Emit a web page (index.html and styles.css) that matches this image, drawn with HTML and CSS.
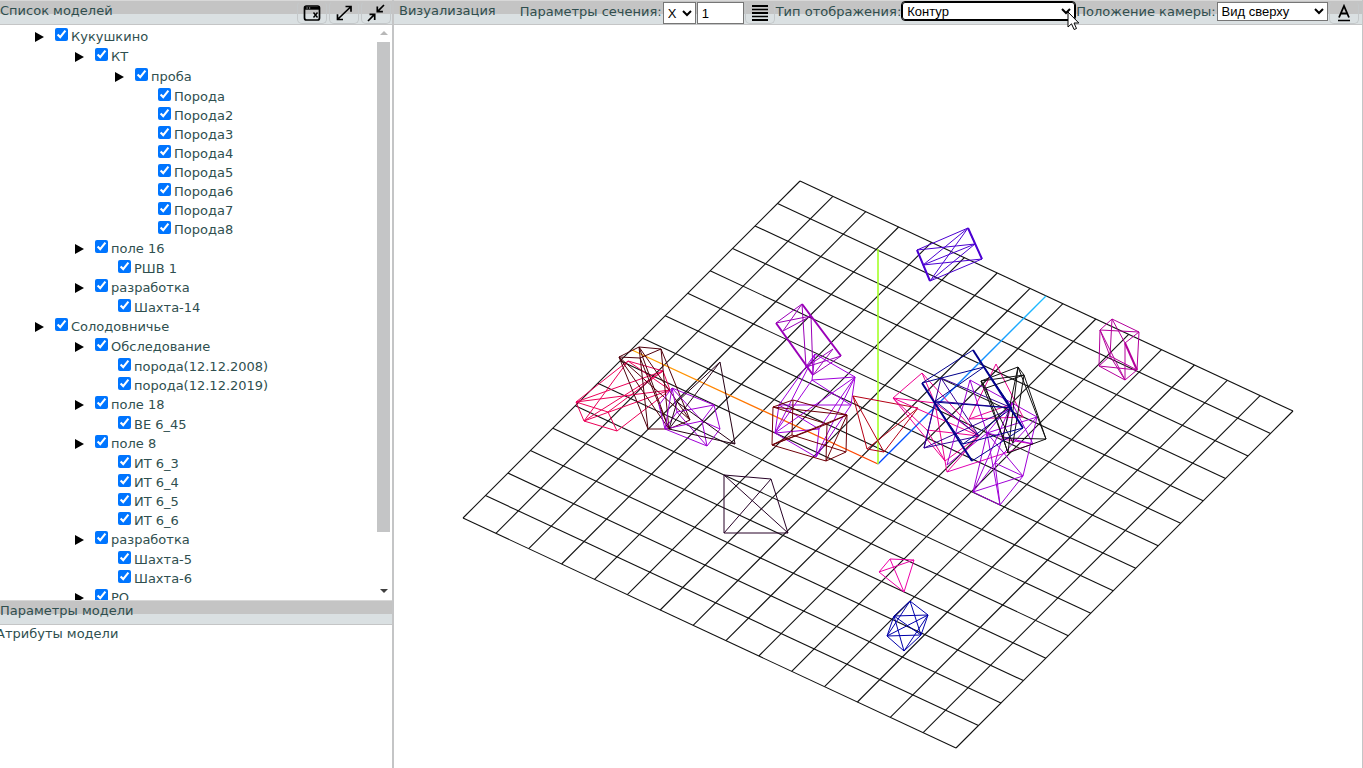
FILE: index.html
```html
<!DOCTYPE html>
<html lang="ru">
<head>
<meta charset="utf-8">
<title>Визуализация моделей</title>
<link rel="stylesheet" href="styles.css">
</head>
<body>
<div class="app">
  <aside class="side">
    <section class="panel models">
      <header class="bar">
        <h2 class="title title-cut">Список моделей</h2>
        <div class="tools">
          <button class="tool" type="button" aria-label="Закрыть окно"><svg width="18" height="18" viewBox="0 0 18 18"><rect x="1.500" y="2" width="15" height="14" rx="2" fill="none" stroke="#000" stroke-width="1.700"/><path d="M1.500 4.200h15" stroke="#000" stroke-width="3"/><path d="M3.500 4h1.200M6 4h1.200" stroke="#ccc"/><path d="M10.500 8.500l4 5M14.500 8.500l-4 5" stroke="#000" stroke-width="1.400"/></svg></button>
          <button class="tool" type="button" aria-label="Развернуть"><svg width="18" height="18" viewBox="0 0 18 18" fill="none" stroke="#000" stroke-width="1.700"><path d="M3 15L15.500 3M10.500 2.500h5.500v5.300M2.500 10.200v5.300h5.500"/></svg></button>
          <button class="tool" type="button" aria-label="Свернуть"><svg width="18" height="18" viewBox="0 0 18 18" fill="none" stroke="#000" stroke-width="1.700"><path d="M17 1l-6.300 6.300M10.300 2.500v5.200h5.600M1 17l6.300-6.300M2.500 10.300h5.200v5.600"/></svg></button>
        </div>
      </header>
      <div class="tree-area">
        <ul class="tree" id="tree"></ul>
        <div class="scroll" aria-hidden="true">
          <span class="up"></span><div class="track"><div class="thumb"></div></div><span class="down"></span>
        </div>
      </div>
    </section>
    <section class="panel params">
      <header class="bar"><h2 class="title title-cut">Параметры модели</h2></header>
      <p class="attrs">Атрибуты модели</p>
    </section>
  </aside>
  <main class="view">
    <header class="bar">
      <h2 class="title">Визуализация</h2>
      <label class="lbl first" for="axis">Параметры сечения:</label>
      <select class="field axis" id="axis"><option>X</option></select>
      <input class="field num" type="text" value="1" aria-label="Значение сечения">
      <button class="tool" type="button" aria-label="Сечения"><svg width="16" height="16" viewBox="0 0 16 16" stroke="#000" stroke-width="2"><path d="M0 1h16M0 8h16M0 15h16"/><path d="M0 4.500h16M0 11.500h16" stroke-width="1.500"/></svg></button>
      <label class="lbl" for="mode">Тип отображения:</label>
      <select class="field mode" id="mode"><option>Контур</option></select>
      <label class="lbl" for="cam">Положение камеры:</label>
      <select class="field cam" id="cam"><option>Вид сверху</option></select>
      <button class="tool letter" type="button" aria-label="Подписи"><svg width="16" height="18" viewBox="0 0 16 18" fill="none" stroke="#000"><path d="M3 13.500L8 2l5 11.500M4.800 9.500h6.400" stroke-width="1.800"/><path d="M2 16.500h12" stroke-width="1.500"/></svg></button>
    </header>
    <svg class="scene" id="scene" viewBox="394 25 968 743" preserveAspectRatio="xMinYMin meet"></svg>
  </main>
  <svg class="pointer" width="14" height="20" viewBox="0 0 14 20"><path d="M1 1v15l3.500-3.200 2.600 5.700 2.400-1-2.500-5.500h4.800z" fill="#fff" stroke="#000"/></svg>
</div>
<script src="app.js"></script>
</body>
</html>
```

FILE: styles.css
```css
* { box-sizing: border-box; }
body {
  margin: 0;
  font: 13px/19px "DejaVu Sans", Verdana, sans-serif;
  color: #2f4f4f;
  background: #fff;
}
.app {
  display: grid;
  grid-template-columns: 394px minmax(0, 1fr);
  height: 100vh;
  overflow: hidden;
}
.side {
  display: grid;
  grid-template-rows: minmax(0, 600fr) minmax(0, 168fr);
  min-height: 0;
  border-right: 2px solid #c4c5c6;
}
.panel { display: flex; flex-direction: column; min-height: 0; overflow: hidden; }
.bar {
  display: flex;
  flex: none;
  align-items: flex-start;
  height: 25px;
  border-top: 1px solid #d8d8d8;
  border-bottom: 1px solid #c4c5c6;
  background: linear-gradient(#c4c4c4 13px, #dae0e2 13px);
  white-space: nowrap;
}
.title { margin: 0; padding-left: 5px; font-size: 13px; font-weight: 400; line-height: 20px; }
.title-cut { padding-left: 0; }
.tools { display: flex; gap: 2px; margin: 0 1px 0 auto; }
.tool {
  display: flex;
  align-items: center;
  justify-content: center;
  width: 30px;
  height: 23px;
  padding: 0;
  border: 1px solid #c4c8ca;
  border-top-color: transparent;
  border-radius: 5px;
  background: transparent;
  color: #000;
}
.tree-area { display: flex; flex: 1; min-height: 0; padding-right: 2px; }
.tree, .tree ul { margin: 0; list-style: none; }
.tree { flex: 1; padding: 2px 0 0 35px; overflow: hidden; }
.tree ul { padding-left: 40px; }
.row { display: flex; align-items: flex-start; height: 20px; }
.row-leaf { height: 19px; margin-left: -1px; }
.arrow { width: 16px; height: 20px; flex: none; padding-top: 5px; }
.arrow svg { display: block; }
.row input { flex: none; width: 13px; height: 13px; margin: 1px 3px 0 4px; }
.row label { line-height: 19px; }
.scroll { display: flex; flex-direction: column; width: 13px; }
.up, .down { align-self: center; width: 0; height: 0; border: 4px solid transparent; }
.up { margin: 6px 0 3px; border-top: 0; border-bottom-color: #b8b8b8; }
.down { margin: 3px 0 7px; border-bottom: 0; border-top-color: #404040; }
.track { flex: 1; padding-top: 4px; }
.thumb { height: 90%; background: #c4c5c6; }
.attrs { margin: -1px 0 0 -4px; }
.view { display: flex; flex-direction: column; min-width: 0; border-right: 1px solid #c4c5c6; }
.view .bar { gap: 1px; }
.lbl { line-height: 21px; }
.lbl.first { margin-left: 23px; }
.field {
  height: 22px;
  margin: 1px 0 0;
  border: 1px solid #767676;
  border-radius: 0;
  background-color: #fff;
  color: #000;
  font: 13px "Liberation Sans", Arial, sans-serif;
}
.axis { width: 33px; }
.num { width: 47px; padding: 0 4px; }
.mode { width: 173px; height: 18px; outline: 1px solid #000; border-color: #000; border-radius: 3px; }
.cam { width: 111px; height: 19px; }
.scene { display: block; flex: 1; min-height: 0; width: 100%; }
.pointer { position: absolute; left: 1067px; top: 11px; }
```

FILE: app.js
```js
const data = [
  ['Кукушкино', [
    ['КТ', [['проба', ['Порода', 'Порода2', 'Порода3', 'Порода4', 'Порода5', 'Порода6', 'Порода7', 'Порода8']]]],
    ['поле 16', ['РШВ 1']],
    ['разработка', ['Шахта-14']]
  ]],
  ['Солодовничье', [
    ['Обследование', ['порода(12.12.2008)', 'порода(12.12.2019)']],
    ['поле 18', ['BE 6_45']],
    ['поле 8', ['ИТ 6_3', 'ИТ 6_4', 'ИТ 6_5', 'ИТ 6_6']],
    ['разработка', ['Шахта-5', 'Шахта-6']],
    ['РО', []]
  ]]
];
let nextId = 0;
function node(item) {
  const leaf = typeof item === 'string';
  const name = leaf ? item : item[0];
  const id = 'n' + nextId++;
  const arrow = leaf ? '' : '<span class="arrow"><svg width="9" height="10"><path d="M0 0L9 5L0 10z"/></svg></span>';
  const kids = leaf ? '' : '<ul>' + item[1].map(node).join('') + '</ul>';
  return `<li><div class="row${leaf ? ' row-leaf' : ''}">${arrow}<input type="checkbox" id="${id}" checked><label for="${id}">${name}</label></div>${kids}</li>`;
}
document.getElementById('tree').innerHTML = data.map(node).join('');

let out = '';
const line = (a, b, c, d, color, w = 1) => {
  out += `<line x1="${a}" y1="${b}" x2="${c}" y2="${d}" stroke="${color}" stroke-width="${w}"/>`;
};
for (let i = 0; i <= 15; i++) {
  const t = i / 15;
  line(800 + 493 * t, 181 + 230 * t, 463 + 493 * t, 518 + 230 * t, '#111', 1.1);
  line(800 - 337 * t, 181 + 337 * t, 1293 - 337 * t, 411 + 337 * t, '#111', 1.1);
}
out += `<defs>
<linearGradient id="gx" gradientUnits="userSpaceOnUse" x1="878" y1="464" x2="632" y2="350"><stop stop-color="#ff3c00"/><stop offset="1" stop-color="#ffa800"/></linearGradient>
<linearGradient id="gz" gradientUnits="userSpaceOnUse" x1="878" y1="464" x2="1046" y2="296"><stop stop-color="#0040ff"/><stop offset="1" stop-color="#20c0ff"/></linearGradient></defs>`;
line(878, 464, 632, 350, 'url(#gx)', 1.3);
line(878, 464, 1046, 296, 'url(#gz)', 1.3);
line(878, 464, 878, 249, '#a4ff28', 1.6);

// Each model: colour, vertices, edges as vertex-index pairs, and heavier edges.
const models = [
  ['#4b00d2', [[917,250],[968,228],[982,259],[930,281],[923,265],[975,244]], '01 12 23 34 40 15 05 45 41 42 35 31', '03 12'],
  ['#b4009b', [[1112,319],[1139,332],[1137,370],[1125,380],[1099,366],[1100,330],[1110,356],[1125,343]], '01 12 23 34 45 50 51 06 56 46 62 42 63 07 71 73 53', '72'],
  ['#9a00b8', [[802,304],[776,323],[841,356],[813,375],[783,331],[811,316],[806,367],[833,349]], '01 32 04 45 06 53 51 67 62 37 05', '13 02'],
  ['#a000dc', [[815,354],[855,377],[851,405],[816,457],[775,433],[779,405],[812,380],[819,429]], '01 12 23 13 34 45 50 06 61 62 04 64 41 52 17 37 47 57'],
  ['#6e0008', [[773,407],[793,400],[847,415],[846,452],[826,461],[772,445],[827,424],[792,435]], '01 12 23 34 45 50 06 62 64 17 75 73 52 56 42 02'],
  ['#b40014', [[853,396],[918,408],[884,452],[867,449]], '01 12 23 30 02 13'],
  ['#ec0058', [[576,402],[628,361],[663,371],[670,390],[617,431],[584,421],[608,412]], '01 12 23 34 45 50 02 03 51 52 53 06 64 62 13'],
  ['#50000c', [[619,357],[639,347],[661,349],[690,420],[669,429],[648,429],[640,358]], '01 12 23 34 45 50 06 62 15 14 13 24 04 64 03'],
  ['#9f00d6', [[672,388],[714,405],[720,429],[707,446],[665,429],[659,405],[677,412],[702,421]], '01 12 23 34 45 50 06 61 63 64 07 73 71 47 04 72'],
  ['#250014', [[720,362],[735,444],[669,429],[677,402]], '01 12 20 03 31 23'],
  ['#260026', [[724,475],[771,479],[788,533],[724,533]], '01 12 23 30 02 13'],
  ['#ed00a7', [[879,572],[890,559],[914,560],[904,592]], '01 12 23 30 13 02'],
  ['#0000aa', [[910,601],[928,615],[921,635],[904,651],[887,636],[894,616]], '01 12 23 34 45 50 04 02 51 42 52 53 13 14'],
  ['#ed0090', [[922,373],[893,398],[945,461],[947,472],[979,436],[935,403],[927,430]], '01 12 23 14 04 05 15 64 62 16 34 24 54 25'],
  ['#ed0090', [[996,364],[969,419],[1023,417],[1012,404]], '01 02 12 13'],
  ['#e000b4', [[947,472],[1033,444],[1002,439]], '01 12'],
  ['#320096', [[941,378],[924,448],[979,436],[1012,408],[935,401]], '01 02 12 43 03 14 24 13'],
  ['#9f00d6', [[970,380],[1037,417],[1023,476],[1000,505],[973,492],[987,433],[1012,403],[995,463],[947,465],[1033,444]], '61 12 23 34 45 56 46 37 67 17 47 27 53 42 52 08 05 06 51 59 69 85'],
  ['#101010', [[1018,367],[1024,375],[1046,439],[1008,453],[1003,438],[981,381],[986,388],[1013,443]], '01 12 23 34 45 50 56 61 63 02 04 17 24 57 51 03'],
  ['#00008b', [[973,350],[922,383],[972,461],[1023,428],[984,367],[934,402],[963,444],[1012,408]], '01 23 41 45 47 56 63 67 57', '12 03']
];
for (const [color, v, edges, heavy] of models) {
  for (const e of edges.split(' ')) line(...v[e[0]], ...v[e[1]], color);
  if (heavy) for (const e of heavy.split(' ')) line(...v[e[0]], ...v[e[1]], color, 2);
}
document.getElementById('scene').innerHTML = out;
```
